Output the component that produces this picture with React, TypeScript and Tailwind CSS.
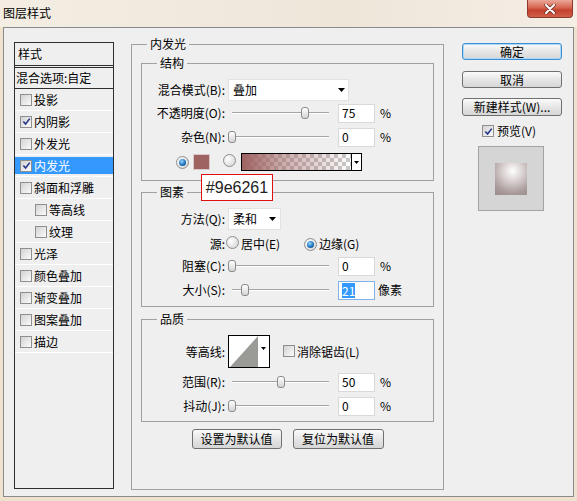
import React from "react";

const cjk = "font-['Noto_Sans_CJK_SC','Noto_Sans',sans-serif]";

type Item = { t: string; c?: boolean; sub?: boolean; sel?: boolean };

const items: Item[] = [
  { t: "投影" },
  { t: "内阴影", c: true },
  { t: "外发光" },
  { t: "内发光", c: true, sel: true },
  { t: "斜面和浮雕" },
  { t: "等高线", sub: true },
  { t: "纹理", sub: true },
  { t: "光泽" },
  { t: "颜色叠加" },
  { t: "渐变叠加" },
  { t: "图案叠加" },
  { t: "描边" },
];

function Check({ checked }: { checked?: boolean }) {
  return (
    <span className="inline-flex h-[12px] w-[12px] shrink-0 items-center justify-center border border-[#8f8f8f] bg-[linear-gradient(135deg,#d2d2d2,#fbfbfb)]">
      {checked && (
        <svg viewBox="0 0 10 10" className="h-[9px] w-[9px]">
          <path d="M1.5 5 L4 7.8 L8.6 1.8" fill="none" stroke="#26378a" strokeWidth="1.8" />
        </svg>
      )}
    </span>
  );
}

function Radio({ on }: { on?: boolean }) {
  return (
    <span className="inline-flex h-[13px] w-[13px] shrink-0 items-center justify-center rounded-full border border-[#8e8e8e] bg-[radial-gradient(circle_at_35%_35%,#ffffff,#d0d0d0)]">
      {on && <span className="h-[7px] w-[7px] rounded-full bg-[radial-gradient(circle_at_40%_35%,#9ad6ff,#1f74c0_55%,#0c3a6a)]" />}
    </span>
  );
}

function Arrow() {
  return (
    <svg viewBox="0 0 7 4" className="h-[4px] w-[7px]">
      <path d="M0 0 H7 L3.5 4 Z" fill="#000" />
    </svg>
  );
}

function Slider({ pos }: { pos: number }) {
  return (
    <div className="relative ml-[3px] h-full w-[106px] shrink-0">
      <div className="absolute left-[4px] top-[9px] h-[2px] w-[97px] border-t border-[#a4a4a4] bg-white" />
      <div
        className="absolute top-[4px] h-[12px] w-[8px] rounded-[3px] border border-[#8a8a8a] bg-[linear-gradient(#ffffff,#d4d4d4)]"
        style={{ left: Math.round(pos * 97) }}
      />
    </div>
  );
}

function Num({ v, focus }: { v: string; focus?: boolean }) {
  return (
    <div
      className={
        focus
          ? "ml-[4px] flex h-[19px] w-[37px] shrink-0 items-center border border-[#7fb2e6] bg-white pl-[3px]"
          : "ml-[4px] flex h-[19px] w-[37px] shrink-0 items-center border border-[#d9d9d9] bg-white pl-[3px]"
      }
    >
      {focus ? <span className="bg-[#3399ff] leading-[15px] text-white">{v}</span> : v}
    </div>
  );
}

function Label({ children }: { children: React.ReactNode }) {
  return <div className="w-[83px] shrink-0 text-right">{children}</div>;
}

function SliderRow({ label, pos, v, unit, focus, cls }: { label: string; pos: number; v: string; unit: string; focus?: boolean; cls: string }) {
  return (
    <div className={`flex h-[20px] items-center ${cls}`}>
      <Label>{label}</Label>
      <Slider pos={pos} />
      <Num v={v} focus={focus} />
      <span className={unit === "%" ? "ml-[5px]" : "ml-[3px]"}>{unit}</span>
    </div>
  );
}

function Btn({ children, primary, cls }: { children: React.ReactNode; primary?: boolean; cls: string }) {
  return (
    <div
      className={`flex items-center justify-center rounded-[3px] border bg-[linear-gradient(#fbfbfb,#e6e6e6_50%,#d6d6d6)] leading-none ${
        primary ? "border-[#3d8fd1] shadow-[inset_0_0_0_1px_#a9d8fb]" : "border-[#707070]"
      } ${cls}`}
    >
      {children}
    </div>
  );
}

export default function App() {
  return (
    <div className={`relative h-[501px] w-[577px] overflow-hidden bg-[#eee2cf] text-[12px] text-black ${cjk}`}>
      {/* title bar */}
      <div className="flex h-[27px] items-start justify-between bg-[linear-gradient(to_right,#f3ede3,#efe6da_60%,#f4eee5)]">
        <span className="pl-[3px] pt-[5px] leading-[16px]">图层样式</span>
        <div className="mr-[4px] flex h-[18px] w-[46px] items-center justify-center rounded-b-[4px] border border-t-0 border-[#8c3a2d] bg-[linear-gradient(#eba899,#d6654f_45%,#c4412c_60%,#d0604b)]">
          <svg viewBox="0 0 12 10" className="h-[10px] w-[12px]">
            <path d="M2 1 L10 9 M10 1 L2 9" stroke="#6b2a20" strokeWidth="3.4" strokeLinecap="round" />
            <path d="M2 1 L10 9 M10 1 L2 9" stroke="#ffffff" strokeWidth="2" strokeLinecap="round" />
          </svg>
        </div>
      </div>

      {/* dialog body */}
      <div className="mx-[3px] flex h-[470px] w-[571px] items-start border border-[#8a8a8a] bg-[#efefef]">
        {/* style list */}
        <div className="ml-[10px] mt-[14px] h-[447px] w-[100px] shrink-0 border border-[#2e2e2e]">
          <div className="flex h-[25px] items-center border-b-[3px] border-double border-[#2e2e2e] pl-[3px]">样式</div>
          <div className="flex h-[21px] items-center border-b border-[#2e2e2e] pl-[1px]">混合选项:自定</div>
          {items.map((it) => (
            <div key={it.t} className="flex h-[22px] items-center border-b border-white">
              <div
                className={`flex h-[17px] w-full items-center ${it.sub ? "pl-[20px]" : "pl-[5px]"} ${
                  it.sel ? "bg-[#3399ff] text-white" : ""
                }`}
              >
                <Check checked={it.c} />
                <span className="ml-[2px]">{it.t}</span>
              </div>
            </div>
          ))}
        </div>

        {/* inner glow group */}
        <fieldset className="ml-[17px] mt-[8px] h-[454px] w-[313px] shrink-0 border border-[#a0a0a0]">
          <legend className="ml-[15px] px-[3px] leading-[16px]">内发光</legend>

          <fieldset className="ml-[9px] mt-[3px] h-[126px] w-[293px] border border-[#a0a0a0]">
            <legend className="ml-[15px] px-[3px] leading-[16px]">结构</legend>
            <div className="mt-[8px] flex h-[22px] items-center">
              <Label>混合模式(B):</Label>
              <div className="ml-[3px] flex h-[22px] w-[121px] items-center justify-between border border-[#e2e2e2] bg-white pl-[4px] pr-[3px]">
                <span>叠加</span>
                <Arrow />
              </div>
            </div>
            <SliderRow cls="mt-[2px]" label="不透明度(O):" pos={0.75} v="75" unit="%" />
            <SliderRow cls="mt-[4px]" label="杂色(N):" pos={0} v="0" unit="%" />
            <div className="mt-[5px] flex h-[20px] items-center pl-[34px]">
              <Radio on />
              <span className="ml-[4px] h-[16px] w-[17px] border border-[#d8c8c8] bg-[#9e6261]" />
              <span className="ml-[13px]">
                <Radio />
              </span>
              <div className="ml-[5px] flex h-[18px] w-[121px] border border-black">
                <div className="flex-1 [background-image:linear-gradient(to_right,#9e6261,rgba(158,98,97,0.55)_35%,rgba(158,98,97,0)),repeating-conic-gradient(#c9c9c9_0%_25%,#ffffff_0%_50%)] [background-size:100%_100%,8px_8px]" />
                <div className="flex w-[10px] items-center justify-center border-l border-black bg-white">
                  <svg viewBox="0 0 5 3" className="h-[3px] w-[5px]">
                    <path d="M0 0 H5 L2.5 3 Z" fill="#000" />
                  </svg>
                </div>
              </div>
            </div>
          </fieldset>

          <fieldset className="ml-[9px] mt-[3px] h-[123px] w-[293px] border border-[#a0a0a0]">
            <legend className="ml-[15px] px-[3px] leading-[16px]">图素</legend>
            <div className="mt-[8px] flex h-[22px] items-center">
              <Label>方法(Q):</Label>
              <div className="ml-[3px] flex h-[22px] w-[53px] items-center justify-between border border-[#e2e2e2] bg-white pl-[4px] pr-[4px]">
                <span>柔和</span>
                <Arrow />
              </div>
            </div>
            <div className="mt-[4px] flex h-[20px] items-center">
              <Label>源:</Label>
              <span className="ml-[1px]">
                <Radio />
              </span>
              <span className="ml-[2px] w-[63px]">居中(E)</span>
              <Radio on />
              <span className="ml-[2px]">边缘(G)</span>
            </div>
            <SliderRow cls="mt-[2px]" label="阻塞(C):" pos={0} v="0" unit="%" />
            <SliderRow cls="mt-[4px]" label="大小(S):" pos={0.13} v="21" unit="像素" focus />
          </fieldset>

          <fieldset className="ml-[9px] mt-[4px] h-[111px] w-[293px] border border-[#a0a0a0]">
            <legend className="ml-[15px] px-[3px] leading-[16px]">品质</legend>
            <div className="mt-[8px] flex h-[33px] items-center">
              <Label>等高线:</Label>
              <div className="ml-[3px] flex h-[33px] w-[42px] border border-black bg-white">
                <svg viewBox="0 0 29 31" className="h-[31px] w-[29px]">
                  <path d="M1 31 L29 0 L29 31 Z" fill="#9a9a96" />
                </svg>
                <div className="flex flex-1 items-start justify-center pt-[11px]">
                  <svg viewBox="0 0 5 3" className="h-[3px] w-[5px]">
                    <path d="M0 0 H5 L2.5 3 Z" fill="#000" />
                  </svg>
                </div>
              </div>
              <span className="ml-[13px]">
                <Check />
              </span>
              <span className="ml-[2px]">消除锯齿(L)</span>
            </div>
            <SliderRow cls="mt-[4px]" label="范围(R):" pos={0.5} v="50" unit="%" />
            <SliderRow cls="mt-[4px]" label="抖动(J):" pos={0} v="0" unit="%" />
          </fieldset>

          <div className="mt-[7px] flex justify-center gap-[11px]">
            <Btn cls="h-[20px] w-[90px]">设置为默认值</Btn>
            <Btn cls="h-[20px] w-[91px]">复位为默认值</Btn>
          </div>
        </fieldset>

        {/* right column */}
        <div className="ml-[18px] mt-[15px] flex w-[100px] shrink-0 flex-col">
          <Btn primary cls="h-[17px]">确定</Btn>
          <Btn cls="mt-[11px] h-[17px]">取消</Btn>
          <Btn cls="mt-[10px] h-[18px]">新建样式(W)...</Btn>
          <div className="mt-[7px] flex h-[16px] items-center pl-[20px]">
            <Check checked />
            <span className="ml-[3px]">预览(V)</span>
          </div>
          <div className="ml-[16px] mt-[7px] flex h-[65px] w-[66px] items-center justify-center border border-[#a3a3a3] bg-[#d5d5d5]">
            <div className="h-[32px] w-[32px] bg-[radial-gradient(circle_at_55%_25%,#ffffff,#d9d0d0_35%,#a8999a_75%,#9a8a8b)]" />
          </div>
        </div>
      </div>

      {/* colour annotation */}
      <div className="absolute left-[201px] top-[174px] flex h-[27px] w-[72px] items-center justify-center border border-[#e01010] bg-white font-['Liberation_Sans',Arial,sans-serif] text-[16px] text-[#222]">
        #9e6261
      </div>
    </div>
  );
}
